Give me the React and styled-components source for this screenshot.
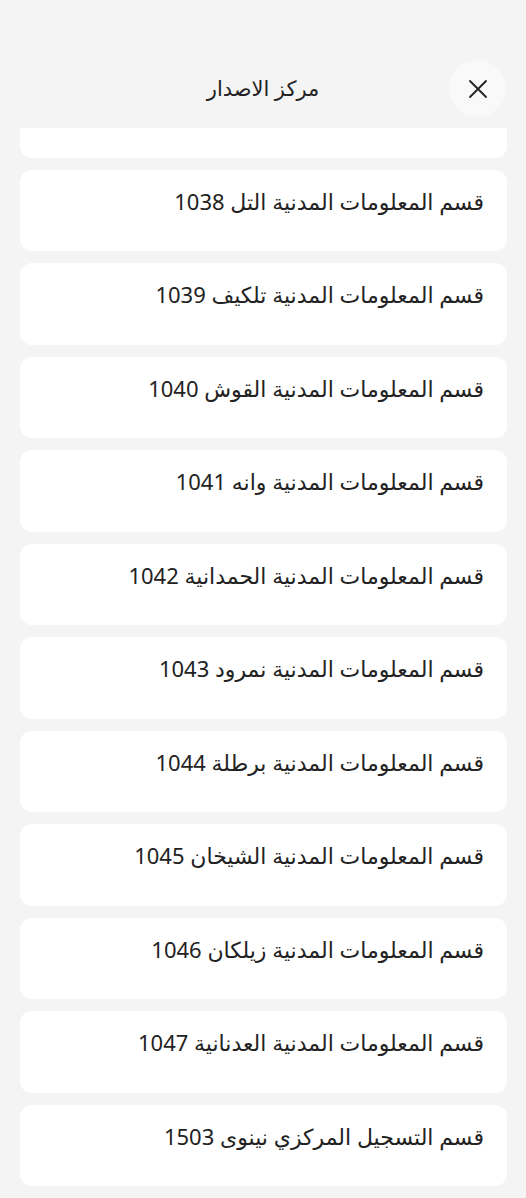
import React, { useRef, useEffect } from 'react';
import styled, { createGlobalStyle } from 'styled-components';

const GlobalStyle = createGlobalStyle`
  html, body {
    margin: 0;
    padding: 0;
    background: #f4f4f4;
  }
  body {
    font-family: "Noto Sans", "DejaVu Sans", sans-serif;
  }
`;

const Screen = styled.div`
  display: flex;
  flex-direction: column;
  height: 1198px;
  background: #f4f4f4;
  direction: rtl;
  overflow: hidden;
`;

const Header = styled.div`
  position: relative;
  z-index: 1;
  display: flex;
  align-items: center;
  justify-content: center;
  height: 128px;
  padding-top: 48px;
  box-sizing: border-box;
  flex-shrink: 0;
  background: #f4f4f4;
`;

const Title = styled.h1`
  margin: 0;
  font-size: 21px;
  font-weight: 400;
  color: #222;
`;

const CloseButton = styled.button`
  position: absolute;
  right: 20px;
  top: 60px;
  width: 57px;
  height: 57px;
  border-radius: 50%;
  border: none;
  background: #f9f9f9;
  display: flex;
  align-items: center;
  justify-content: center;
  padding: 0;
  cursor: pointer;
`;

const List = styled.div`
  flex: 1;
  overflow-y: auto;
  scrollbar-width: none;
  padding: 0 19px 12px 20px;
  display: flex;
  flex-direction: column;
  gap: 12px;
  &::-webkit-scrollbar { display: none; }
`;

const Card = styled.div`
  flex-shrink: 0;
  height: 81.5px;
  box-sizing: border-box;
  background: #fff;
  border-radius: 12px;
  padding: 15px 23px 0 23px;
  font-size: 22px;
  line-height: 32px;
  color: #222;
  text-align: right;
`;

const offices = [
  'قسم المعلومات المدنية 1037',
  'قسم المعلومات المدنية التل 1038',
  'قسم المعلومات المدنية تلكيف 1039',
  'قسم المعلومات المدنية القوش 1040',
  'قسم المعلومات المدنية وانه 1041',
  'قسم المعلومات المدنية الحمدانية 1042',
  'قسم المعلومات المدنية نمرود 1043',
  'قسم المعلومات المدنية برطلة 1044',
  'قسم المعلومات المدنية الشيخان 1045',
  'قسم المعلومات المدنية زيلكان 1046',
  'قسم المعلومات المدنية العدنانية 1047',
  'قسم التسجيل المركزي نينوى 1503',
];

export default function App() {
  const listRef = useRef(null);

  useEffect(() => {
    // the list is shown scrolled a little, first card cut off
    if (listRef.current) listRef.current.scrollTop = 52;
  }, []);

  return (
    <>
      <GlobalStyle />
      <Screen>
        <Header>
          <Title>مركز الاصدار</Title>
          <CloseButton aria-label="close">
            <svg width="20" height="20" viewBox="0 0 20 20" fill="none">
              <path d="M2 2L18 18M18 2L2 18" stroke="#222" strokeWidth="1.8" strokeLinecap="round" />
            </svg>
          </CloseButton>
        </Header>
        <List ref={listRef}>
          {offices.map((name) => (
            <Card key={name}>{name}</Card>
          ))}
        </List>
      </Screen>
    </>
  );
}
